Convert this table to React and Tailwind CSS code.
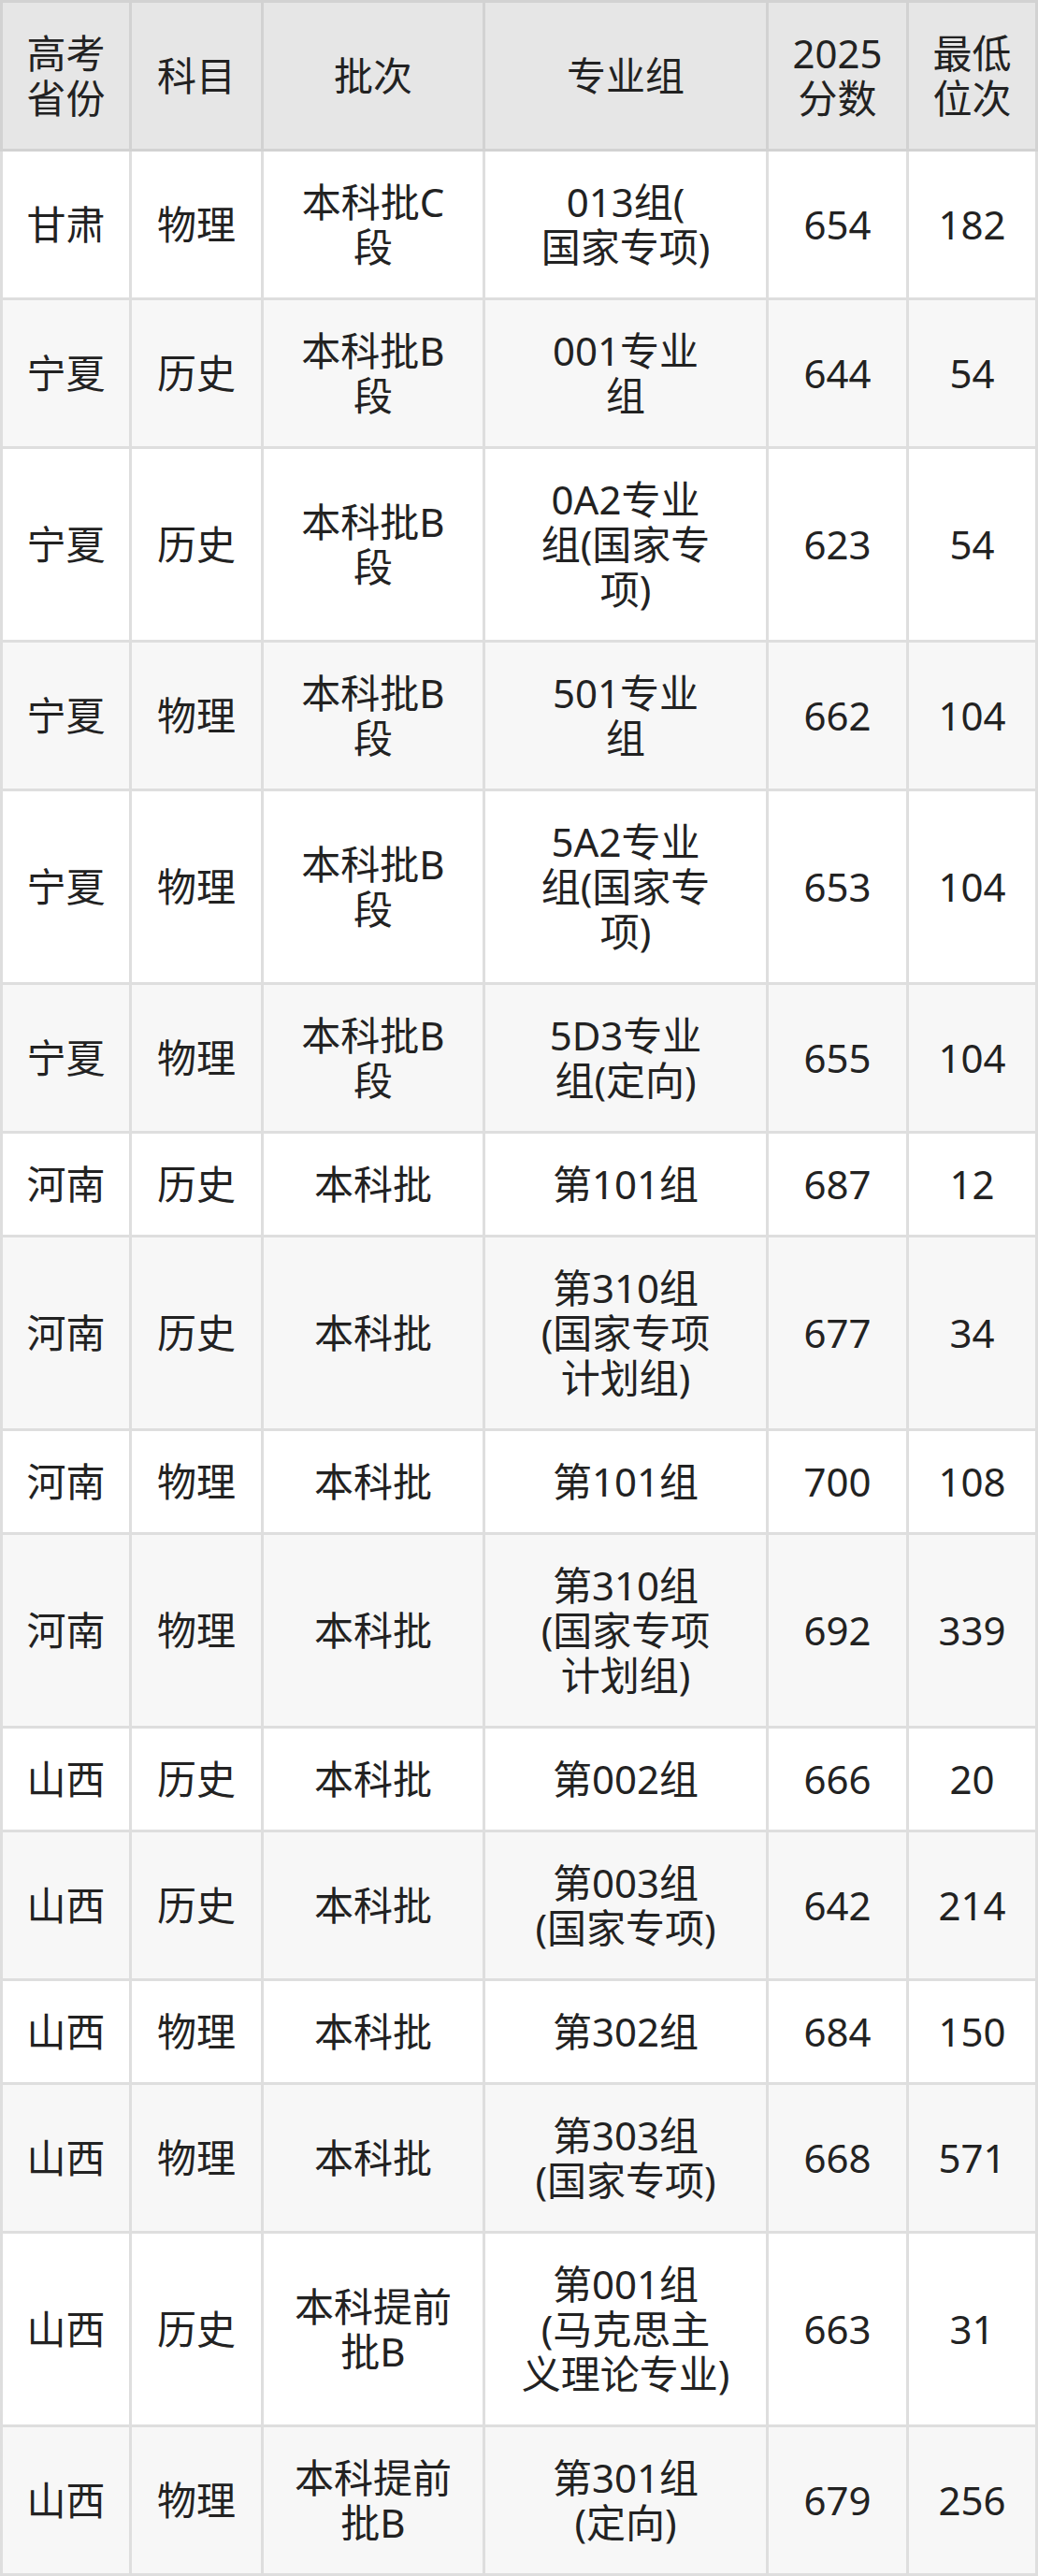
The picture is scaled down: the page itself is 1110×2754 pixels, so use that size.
import React from "react";

const headers = [["高考", "省份"], ["科目"], ["批次"], ["专业组"], ["2025", "分数"], ["最低", "位次"]];

// widths include the 3px left border (last one also the right border)
const widths = ["w-[138px]", "w-[141px]", "w-[237px]", "w-[303px]", "w-[150px]", "w-[141px]"];

const rows = [
  ["甘肃", "物理", ["本科批C", "段"], ["013组(", "国家专项)"], "654", "182"],
  ["宁夏", "历史", ["本科批B", "段"], ["001专业", "组"], "644", "54"],
  ["宁夏", "历史", ["本科批B", "段"], ["0A2专业", "组(国家专", "项)"], "623", "54"],
  ["宁夏", "物理", ["本科批B", "段"], ["501专业", "组"], "662", "104"],
  ["宁夏", "物理", ["本科批B", "段"], ["5A2专业", "组(国家专", "项)"], "653", "104"],
  ["宁夏", "物理", ["本科批B", "段"], ["5D3专业", "组(定向)"], "655", "104"],
  ["河南", "历史", "本科批", "第101组", "687", "12"],
  ["河南", "历史", "本科批", ["第310组", "(国家专项", "计划组)"], "677", "34"],
  ["河南", "物理", "本科批", "第101组", "700", "108"],
  ["河南", "物理", "本科批", ["第310组", "(国家专项", "计划组)"], "692", "339"],
  ["山西", "历史", "本科批", "第002组", "666", "20"],
  ["山西", "历史", "本科批", ["第003组", "(国家专项)"], "642", "214"],
  ["山西", "物理", "本科批", "第302组", "684", "150"],
  ["山西", "物理", "本科批", ["第303组", "(国家专项)"], "668", "571"],
  ["山西", "历史", ["本科提前", "批B"], ["第001组", "(马克思主", "义理论专业)"], "663", "31"],
  ["山西", "物理", ["本科提前", "批B"], ["第301组", "(定向)"], "679", "256"],
];

function Lines({ value }) {
  const lines = Array.isArray(value) ? value : [value];
  return (
    <div className="whitespace-nowrap">
      {lines.map((l, i) => (
        <div key={i}>{l}</div>
      ))}
    </div>
  );
}

function Cell({ idx, value, header }) {
  const last = idx === widths.length - 1;
  return (
    <div
      className={`${widths[idx]} shrink-0 flex items-center justify-center text-center py-[30px] border-l-[3px] ${
        last ? "border-r-[3px]" : ""
      } ${header ? "border-y-[3px] border-[#d2d2d2]" : "border-b-[3px] border-[#dedede]"}`}
    >
      <Lines value={value} />
    </div>
  );
}

export default function App() {
  return (
    <div
      className="w-[1110px] bg-white text-[#222222] text-[42px] leading-[48px]"
      style={{ fontFamily: '"Noto Sans", "Noto Sans CJK SC", sans-serif' }}
    >
      <div className="flex bg-[#e6e6e6]">
        {headers.map((h, i) => (
          <Cell key={i} idx={i} value={h} header />
        ))}
      </div>
      {rows.map((r, ri) => (
        <div key={ri} className={`flex ${ri % 2 === 1 ? "bg-[#f7f7f7]" : "bg-white"}`}>
          {r.map((v, i) => (
            <Cell key={i} idx={i} value={v} />
          ))}
        </div>
      ))}
    </div>
  );
}
